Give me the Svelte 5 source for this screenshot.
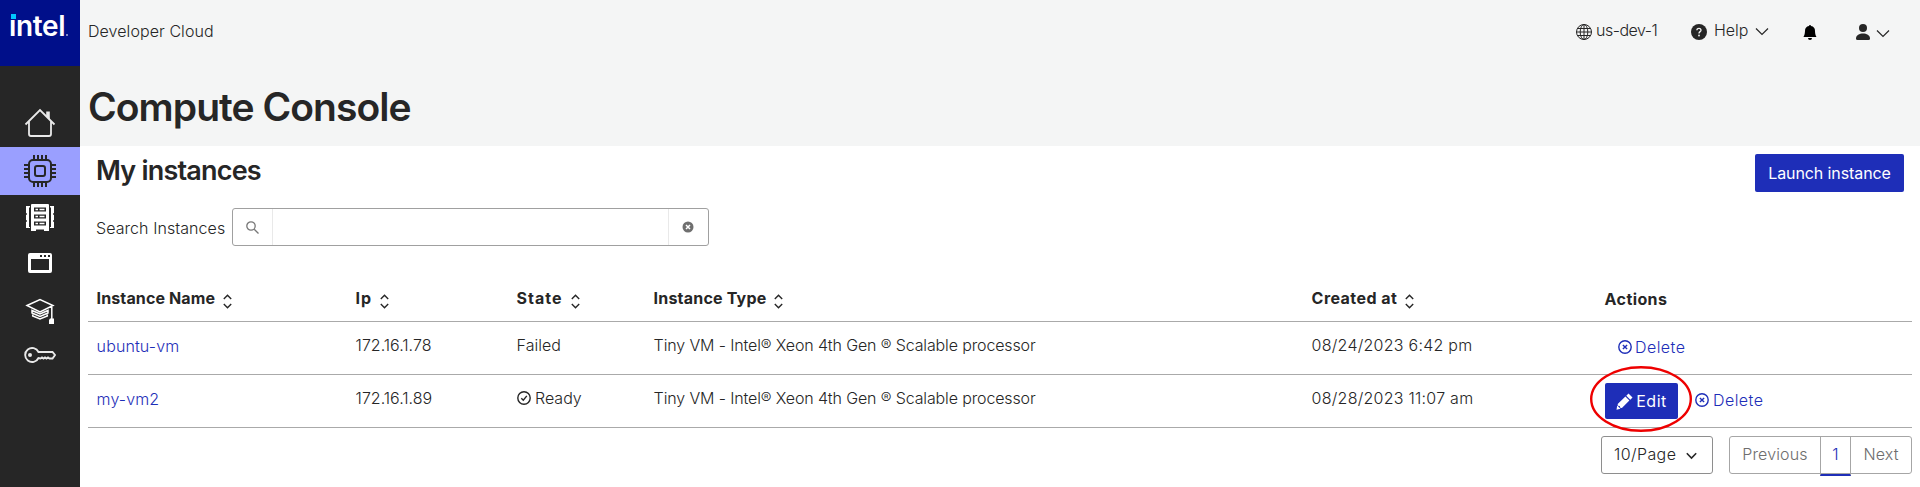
<script>
  const columns = [
    { label: 'Instance Name', key: 'name' },
    { label: 'Ip', key: 'ip' },
    { label: 'State', key: 'state' },
    { label: 'Instance Type', key: 'type' },
    { label: 'Created at', key: 'created' }
  ];
  const type = 'Tiny VM - Intel® Xeon 4th Gen ® Scalable processor';
  const rows = [
    { name: 'ubuntu-vm', ip: '172.16.1.78', state: 'Failed', type, created: '08/24/2023 6:42 pm', ready: false },
    { name: 'my-vm2', ip: '172.16.1.89', state: 'Ready', type, created: '08/28/2023 11:07 am', ready: true }
  ];
</script>

{#snippet sort()}
  <svg class="sort" width="9" height="15" viewBox="0 0 9 15"><path d="M.8 5 4.5 1.3 8.2 5M.8 10 4.5 13.7 8.2 10" /></svg>
{/snippet}
{#snippet del()}
  <svg class="ring" width="14" height="14" viewBox="0 0 14 14"><circle cx="7" cy="7" r="6.2" /><path d="m4.900 4.900 4.200 4.200m0-4.200-4.200 4.200" /></svg>
{/snippet}

<div class="shell">
  <aside>
    <div class="logo"><span class="word">intel</span><i class="dot"></i><i class="reg"></i></div>
    <nav>
      <a href="#home" aria-label="Home">
        <svg width="32" height="32" viewBox="0 0 32 32" fill="none" stroke="#e9e9e9" stroke-width="1.8"><path d="M1.5 17.5 16 3l14.500 14.500M5 14.500V27q0 2 2 2h18q2 0 2-2V14.500" /><path d="M22.200 4.500h3.600V13l-3.600-3.600z" fill="#e9e9e9" stroke="none" /></svg>
      </a>
      <a class="active" href="#compute" aria-label="Compute">
        <svg width="32" height="32" viewBox="0 0 32 32" fill="none" stroke="#262626" stroke-width="2"><rect x="5" y="5" width="22" height="22" rx="4" /><rect x="11" y="11" width="10" height="10" rx="2" /><path d="M10 0v5m4-5v5m4-5v5m4-5v5M10 27v5m4-5v5m4-5v5m4-5v5M0 10h5m-5 4h5m-5 4h5m-5 4h5M27 10h5m-5 4h5m-5 4h5m-5 4h5" /></svg>
      </a>
      <a class="server" href="#clusters" aria-label="Clusters">
        <svg width="32" height="32" viewBox="0 0 32 32" fill="#fff"><path fill-rule="evenodd" d="M8 2h16q1 0 1 1v26h-5v-1.500h-8V29H7V3q0-1 1-1zM10 5.500v4h12v-4zM10 12.500v4h12v-4zM10 19.500v4h12v-4z" /><path d="M11.500 6.700h2.500v1.600h-2.500zm4 0h5v1.600h-5zM11.500 13.700h2.500v1.600h-2.500zm4 0h5v1.600h-5zM11.500 20.700h2.500v1.600h-2.500zm4 0h5v1.600h-5z" /><path d="M2 4h4v1.500H5V25h1v1H2v-6h.7v-2H2v-5h.7v-2H2zM30 4h-4v1.500h1V25h-1v1h4v-6h-.7v-2h.7v-5h-.7v-2h.7z" /></svg>
      </a>
      <a href="#apps" aria-label="Applications">
        <svg width="32" height="32" viewBox="0 0 32 32"><path fill="#fff" fill-rule="evenodd" d="M6 6h20q2 0 2 2v16q0 2-2 2H6q-2 0-2-2V8q0-2 2-2zm1 6v11h18V12z" /><path fill="#262626" d="M16 8h2v2h-2zm4 0h2v2h-2zm4 0h2v2h-2z" /></svg>
      </a>
      <a href="#learn" aria-label="Learning">
        <svg width="32" height="32" viewBox="0 0 32 32" fill="none" stroke="#fff" stroke-width="1.500"><path d="M3 10.500 16 4.500 29 10.500 16 17zM8 15.500v2.500l8 3.500 8-3.500v-2.500l-8 3.500zM8.700 19.500v1.500l7.300 3 7.300-3v-1.500M27.800 11v14" /><path d="M26 23.500h4V29h-5v-4z" fill="#fff" stroke="none" /></svg>
      </a>
      <a class="key" href="#keys" aria-label="Keys">
        <svg width="32" height="32" viewBox="0 0 32 32" fill="none" stroke="#e9e9e9" stroke-width="1.900"><path d="M14.500 13A7 7 0 1 0 14.500 19l2 .500 1.500-1 1.500 1 1.500-1 1.500 1L24 18.500l1.500 1h3L31 16l-2.500-3z" /><circle cx="6" cy="16" r="2" fill="#e9e9e9" stroke="none" /></svg>
      </a>
    </nav>
  </aside>

  <div class="page">
    <header>
      <div class="top">
        <span class="brand">Developer Cloud</span>
        <div class="tools">
          <svg width="16" height="16" viewBox="0 0 16 16" fill="none" stroke="#262626" stroke-width="1"><circle cx="8" cy="8" r="7.500" /><ellipse cx="8" cy="8" rx="3.800" ry="7.500" /><path d="M8 .500v15M.500 8h15M1.500 4.500h13M1.500 11.500h13" /></svg>
          <span class="region">us-dev-1</span>
          <svg class="q" width="16" height="16" viewBox="0 0 16 16"><circle cx="8" cy="8" r="8" fill="#262626" /><path d="M5.900 6.200C5.900 3.700 10 3.700 10 6.200 10 7.700 8 7.600 8 9.400" fill="none" stroke="#f4f5f5" stroke-width="1.300" /><circle cx="8" cy="11.500" r=".9" fill="#f4f5f5" /></svg>
          <span class="help">Help</span>
          <svg class="down d1" width="14" height="9" viewBox="0 0 14 9"><path d="m1 1.500 6 6 6-6" /></svg>
          <svg class="bell" width="14" height="16" viewBox="0 0 14 16"><path d="M7 16a2 2 0 0 0 2-2H5a2 2 0 0 0 2 2zM8 1.900a1 1 0 1 0-2 0A5 5 0 0 0 2 6.900c0 1.100-.4 5.300-1.800 6.100h13.600C12.400 12.200 12 8 12 6.900a5 5 0 0 0-4-5z" /></svg>
          <svg class="user" width="14" height="16" viewBox="0 0 14 16" fill="#262626"><circle cx="7" cy="4" r="4" /><path d="M0 14.500C0 7.800 14 7.800 14 14.500q0 1.500-1.500 1.500h-11Q0 16 0 14.500z" /></svg>
          <svg class="down d2" width="14" height="9" viewBox="0 0 14 9"><path d="m1 1.500 6 6 6-6" /></svg>
        </div>
      </div>
      <h1>Compute Console</h1>
    </header>
    <main>
      <div class="titlebar"><h2>My instances</h2><button class="launch">Launch instance</button></div>
      <div class="search">
        <span class="slabel">Search Instances</span>
        <div class="box">
          <div class="side"><svg width="13" height="13" viewBox="0 0 13 13" fill="none" stroke="#777" stroke-width="1.300"><circle cx="5" cy="5" r="4.200" /><path d="m8.200 8.200 4.300 4.300" /></svg></div>
          <div class="field"></div>
          <div class="side clear"><svg width="12" height="12" viewBox="0 0 12 12"><circle cx="6" cy="6" r="5.500" fill="#6f6f6f" /><path d="m4 4 4 4m0-4L4 8" stroke="#fff" stroke-width="1.500" /></svg></div>
        </div>
      </div>
      <div class="table">
        <div class="row head">
          {#each columns as c}<div class="cell"><span class="h-{c.key}">{c.label}</span>{@render sort()}</div>{/each}
          <div class="cell"><span class="h-actions">Actions</span></div>
        </div>
        {#each rows as r}
          <div class="row">
            <div class="cell link"><span>{r.name}</span></div>
            <div class="cell"><span>{r.ip}</span></div>
            <div class="cell">{#if r.ready}<svg class="ring ok" width="14" height="14" viewBox="0 0 14 14"><circle cx="7" cy="7" r="6.200" /><path d="m4.300 7.200 2 2 3.500-4.300" /></svg>{/if}<span>{r.state}</span></div>
            <div class="cell"><span class="ty">{r.type}</span></div>
            <div class="cell"><span class="cr">{r.created}</span></div>
            <div class="cell actions">
              {#if r.ready}
                <button class="edit"><svg width="17" height="17" viewBox="0 0 17 17" fill="#fff"><path d="m12.500.5 4 4-2.200 2.200-4-4zM9.400 3.600l4 4-7.500 7.500-1.700-.3-.4-1.800-1.900-.3-.2-1.600zM1.200 12.500l3.300 3.300-4 .9z" /></svg>Edit</button>
              {/if}
              <a class="del" class:second={r.ready} href="#delete">{@render del()}<span>Delete</span></a>
            </div>
          </div>
        {/each}
      </div>
      <div class="foot">
        <div class="select"><span>10/Page</span><svg width="11" height="8" viewBox="0 0 11 8"><path d="m.8 1.300 4.700 4.700 4.700-4.700" fill="none" stroke="#262626" stroke-width="1.600" /></svg></div>
        <div class="pager"><div class="prev">Previous</div><div class="cur">1</div><div class="next">Next</div></div>
      </div>
    </main>
    <svg class="mark" width="102" height="66" viewBox="0 0 102 66"><ellipse cx="51" cy="33" rx="49.800" ry="31.800" /></svg>
  </div>
</div>

<style>
  :global(body) { background: #fff; overflow: hidden; }
  .shell { display: flex; height: 487px; font: 350 16px/24px Inter, sans-serif; color: #262626; }
  aside { width: 80px; flex: none; background: #262626; }
  .logo { position: relative; height: 66px; box-sizing: border-box; padding: 10px 0 0 9px; background: #000f8a; color: #fff; }
  .word { font-size: 28px; line-height: 32px; font-weight: 600; letter-spacing: -.35px; display: block; }
  .dot { position: absolute; left: 11px; top: 14px; width: 5px; height: 5px; background: #00c7fd; box-shadow: 0 0 0 1px #000f8a; }
  .reg { position: absolute; left: 66px; top: 34px; width: 2px; height: 2px; background: #8087c5; }
  nav { padding-top: 33px; display: flex; flex-direction: column; }
  nav a { display: flex; justify-content: center; align-items: center; height: 48px; box-sizing: border-box; }
  nav a.active { background: #9a9fff; }
  nav a.server { height: 44px; padding-top: 2px; }
  nav a.key { height: 40px; }
  .page { position: relative; flex: 1; }
  header { height: 146px; background: #f4f5f5; }
  .top { display: flex; justify-content: space-between; height: 66px; padding: 0 30px 0 8px; }
  .brand { padding-top: 19px; letter-spacing: .07px; }
  .tools { display: flex; align-items: flex-start; padding-top: 18px; }
  .tools svg { margin-top: 6px; flex: none; }
  .region { width: 62px; margin-left: 4px; letter-spacing: -.5px; white-space: nowrap; }
  .tools .q { margin-left: 33px; }
  .help { width: 36px; margin-left: 7px; }
  .tools .d1 { margin: 9px 0 0 5px; }
  .tools .bell { margin-left: 34px; }
  .tools .user { margin-left: 39px; }
  .tools .d2 { margin: 11px 0 0 6px; }
  .down { fill: none; stroke: #262626; stroke-width: 1.2; }
  h1, h2 { margin: 0; }
  h1 { font-size: 39px; line-height: 48px; font-weight: 560; padding: 17px 0 0 8px; letter-spacing: -.95px; }
  h2 { font-size: 27px; line-height: 34px; font-weight: 560; letter-spacing: -.8px; }
  main { padding: 8px 8px 0; }
  .titlebar { display: flex; justify-content: space-between; padding: 0 8px; height: 54px; }
  button { font: 400 16px/24px Inter, sans-serif; color: #fff; background: #1e2eb8; border: 0; border-radius: 2px; padding: 0; }
  .launch { width: 149px; height: 38px; letter-spacing: -.1px; }
  .search { display: flex; align-items: center; padding-left: 8px; height: 38px; }
  .slabel { width: 136px; letter-spacing: .07px; padding-top: 1px; }
  .box { display: flex; width: 477px; height: 38px; border: 1px solid #a0a0a0; border-radius: 3px; box-sizing: border-box; }
  .side { width: 39px; display: flex; align-items: center; justify-content: center; }
  .side.clear { padding-right: 2px; width: 37px; }
  .field { flex: 1; border: solid #e9e9e9; border-width: 0 1px; }
  .table { margin-top: 34px; }
  .row { display: grid; grid-template-columns: 259px 161px 137px 658px 293px 1fr; padding-left: 8.6px; height: 53px; border-bottom: 1px solid #aaa; box-sizing: border-box; }
  .row.head { height: 42px; font-weight: 700; }
  .cell { display: flex; align-items: flex-start; padding-top: 11px; white-space: nowrap; }
  .cell.link { padding-top: 12px; letter-spacing: .12px; }
  .head .cell { padding-top: 6px; }
  .head .cell:last-child { padding-top: 7px; }
  .h-name { letter-spacing: .12px; }
  .h-ip { letter-spacing: .8px; }
  .h-state { letter-spacing: 1px; }
  .h-type { letter-spacing: .2px; }
  .h-created { letter-spacing: .45px; }
  .h-actions { letter-spacing: .4px; }
  .ty { letter-spacing: -.13px; }
  .cr { letter-spacing: .25px; }
  .sort, .ring { fill: none; stroke: #262626; stroke-width: 1.4; flex: none; }
  .sort { margin: 8px 0 0 8px; }
  .ok { margin: 5px 4px 0 .4px; }
  .link, .del { color: #1e2eb8; text-decoration: none; }
  .cell.actions { padding-top: 0; }
  .del { display: flex; gap: 3px; margin: 13px 0 0 13.4px; letter-spacing: .45px; }
  .del.second { margin-left: 17px; gap: 4px; }
  .del .ring { stroke: #1e2eb8; margin-top: 5px; }
  .edit { width: 73px; height: 36px; margin: 8px 0 0 .4px; display: flex; align-items: center; justify-content: center; gap: 3px; letter-spacing: .5px; }
  .foot { display: flex; justify-content: flex-end; gap: 16px; margin-top: 8px; }
  .select, .pager { box-sizing: border-box; height: 38px; border: 1px solid #a6a6a6; border-radius: 3px; display: flex; }
  .select { width: 112px; padding: 5px 15px 0 12px; justify-content: space-between; letter-spacing: .4px; border-color: #8e8e8e; }
  .select svg { margin-top: 10px; }
  .pager { width: 183px; color: #6e6e6e; text-align: center; letter-spacing: .15px; }
  .pager div { padding-top: 5px; box-sizing: border-box; }
  .prev { width: 90px; }
  .next { flex: 1; }
  .pager .cur { width: 31px; height: 39px; color: #1e2eb8; border: solid #a6a6a6; border-width: 0 1px; border-bottom: 2px solid #1e2eb8; }
  .mark { position: absolute; left: 1510px; top: 366px; fill: none; stroke: #e00; stroke-width: 2.4; }
</style>
